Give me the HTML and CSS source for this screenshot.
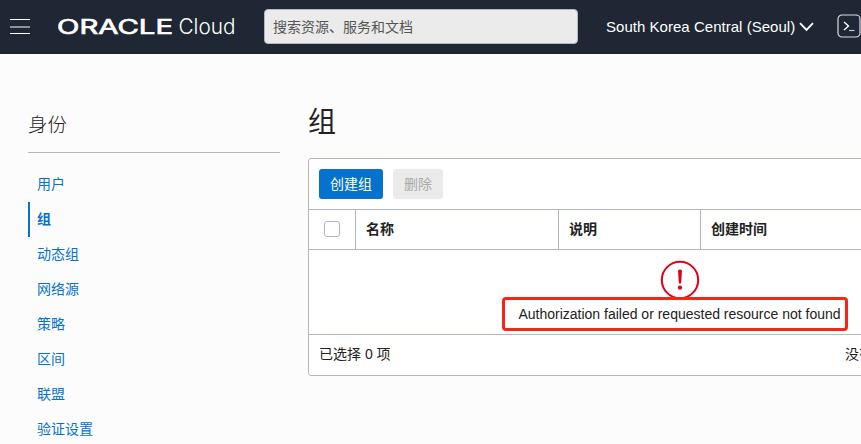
FILE: index.html
```html
<!DOCTYPE html>
<html lang="zh-CN">
<head>
<meta charset="utf-8">
<title>组</title>
<link rel="stylesheet" href="styles.css">
</head>
<body>
<header class="topbar">
  <div class="menu"><i></i><i></i><i></i></div>
  <svg class="logo" width="180" height="30" viewBox="0 0 180 30">
    <text class="brand" x="0" y="22" textLength="116" lengthAdjust="spacingAndGlyphs">ORACLE</text>
    <text class="product" x="121.500" y="22" textLength="57" lengthAdjust="spacingAndGlyphs">Cloud</text>
  </svg>
  <div class="search">搜索资源、服务和文档</div>
  <div class="region">South Korea Central (Seoul)
    <svg width="15" height="10" viewBox="0 0 15 10"><path d="M1 1.200 7.500 8 14 1.200" fill="none" stroke="#fff" stroke-width="1.900"/></svg>
  </div>
  <svg class="console" width="24" height="24" viewBox="0 0 24 24" fill="none" stroke="#fff">
    <rect x="1" y="1" width="22" height="22" rx="4" stroke="#dcdde0" stroke-width="1.200"/>
    <path d="M7 8l4.500 4L7 16" stroke-width="1.400"/><path d="M12 16.500h5.500" stroke="#c5c8cc" stroke-width="1.200"/>
  </svg>
</header>
<div class="page">
  <nav class="sidebar">
    <h2>身份</h2>
    <ul>
      <li>用户</li>
      <li class="active">组</li>
      <li>动态组</li>
      <li>网络源</li>
      <li>策略</li>
      <li>区间</li>
      <li>联盟</li>
      <li>验证设置</li>
    </ul>
  </nav>
  <main class="content">
    <h1>组</h1>
    <section class="panel">
      <div class="toolbar"><button class="primary">创建组</button><button class="disabled" disabled>删除</button></div>
      <div class="columns">
        <div class="check"><span></span></div>
        <div>名称</div><div>说明</div><div>创建时间</div>
      </div>
      <div class="message">
        <svg width="40" height="40" viewBox="0 0 40 40"><circle cx="20" cy="20" r="18.200" fill="none" stroke="#e0001b" stroke-width="2"/><path d="M18 10.500q2-1.800 4 0l-.8 12.500q-1.200 1.200-2.400 0z" fill="#e0001b"/><circle cx="20" cy="27.700" r="2.100" fill="#e0001b"/></svg>
        <p>Authorization failed or requested resource not found</p>
        <div class="highlight"></div>
      </div>
      <div class="footer"><span>已选择 0 项</span><span class="status">没有</span></div>
    </section>
  </main>
</div>
</body>
</html>
```
FILE: styles.css
```css
* { box-sizing: border-box; }
body {
  margin: 0;
  height: 444px;
  overflow: hidden;
  background: #fcfcfc;
  color: #222;
  font: 14px/20px "Liberation Sans", "Noto Sans CJK SC", sans-serif;
}
h1, h2, p, ul { margin: 0; padding: 0; font-weight: 400; }
.topbar {
  display: flex;
  align-items: center;
  height: 54px;
  padding-left: 10px;
  background: #1e2733;
  color: #fff;
}
.menu { display: flex; flex-direction: column; gap: 6px; width: 20px; margin: -2px 27px 0 0; }
.menu i { height: 1px; background: #fff; }
.menu i:nth-child(2) { height: 2px; margin-bottom: -1px; background: #8e9399; }
.logo { flex: none; margin-right: 27px; overflow: visible; }
.brand { font: 400 20.5px Inter, sans-serif; fill: #fff; stroke: #fff; stroke-width: .7px; }
.product { font: 300 21.5px Inter, sans-serif; fill: #fff; }
.search {
  flex: none;
  width: 314px;
  height: 35px;
  margin-top: -1px;
  padding: 8px 8px 6px;
  background: #ebebeb;
  border: 1px solid #b1b8c2;
  border-radius: 4px;
  color: #555;
  line-height: 19px;
}
.region {
  display: flex;
  flex: none;
  align-items: center;
  gap: 4px;
  width: 231px;
  margin-left: 28px;
  font-size: 15px;
  letter-spacing: .03px;
  white-space: nowrap;
}
.console { flex: none; margin-top: -2px; }
.page { display: flex; }
.sidebar { flex: none; width: 252px; margin: 54px 28px 0; }
.sidebar h2 {
  height: 45px;
  padding-top: 2px;
  border-bottom: 1px solid #b1b8c2;
  font-size: 19.5px;
  font-weight: 300;
  line-height: 30px;
}
.sidebar ul { padding-top: 14px; list-style: none; }
.sidebar li { height: 35px; padding-left: 9px; color: #0572ce; line-height: 35px; }
.sidebar .active { padding-left: 7px; border-left: 2px solid #0572ce; font-weight: 700; }
.content { flex: none; width: 743px; }
.content h1 { height: 104px; padding-top: 49px; font-size: 28px; line-height: 40px; }
.panel {
  height: 218px;
  background: #fff;
  border: 1px solid #b1b8c2;
  border-radius: 3px;
}
.toolbar { display: flex; gap: 10px; height: 50px; padding: 10px; }
button { height: 30px; padding: 0; border: 0; border-radius: 3px; font: inherit; }
.primary { width: 64px; background: #0572ce; color: #fff; }
.disabled { width: 50px; background: #ebebeb; color: #aaa; }
.columns {
  display: grid;
  grid-template-columns: 46px 203px 142px 1fr;
  height: 41px;
  border: solid #b1b8c2;
  border-width: 1px 0;
  font-weight: 700;
  line-height: 39px;
}
.columns > div + div { padding-left: 10px; border-left: 1px solid #b1b8c2; }
.check { padding: 11px 15px; }
.check span { display: block; width: 16px; height: 16px; border: 1px solid #b1b8c2; border-radius: 3px; }
.message {
  position: relative;
  height: 84px;
  padding-top: 10px;
  text-align: center;
}
.message svg { display: block; margin: 0 auto; }
.message p { padding-top: 4px; }
.highlight {
  position: absolute;
  left: 193px;
  top: 47px;
  width: 346px;
  height: 34px;
  border: 3px solid #fb2414;
  border-radius: 4px;
}
.footer {
  display: flex;
  height: 41px;
  padding-left: 10px;
  border-top: 1px solid #b1b8c2;
  line-height: 39px;
}
.footer span:first-child { width: 526px; }
```
